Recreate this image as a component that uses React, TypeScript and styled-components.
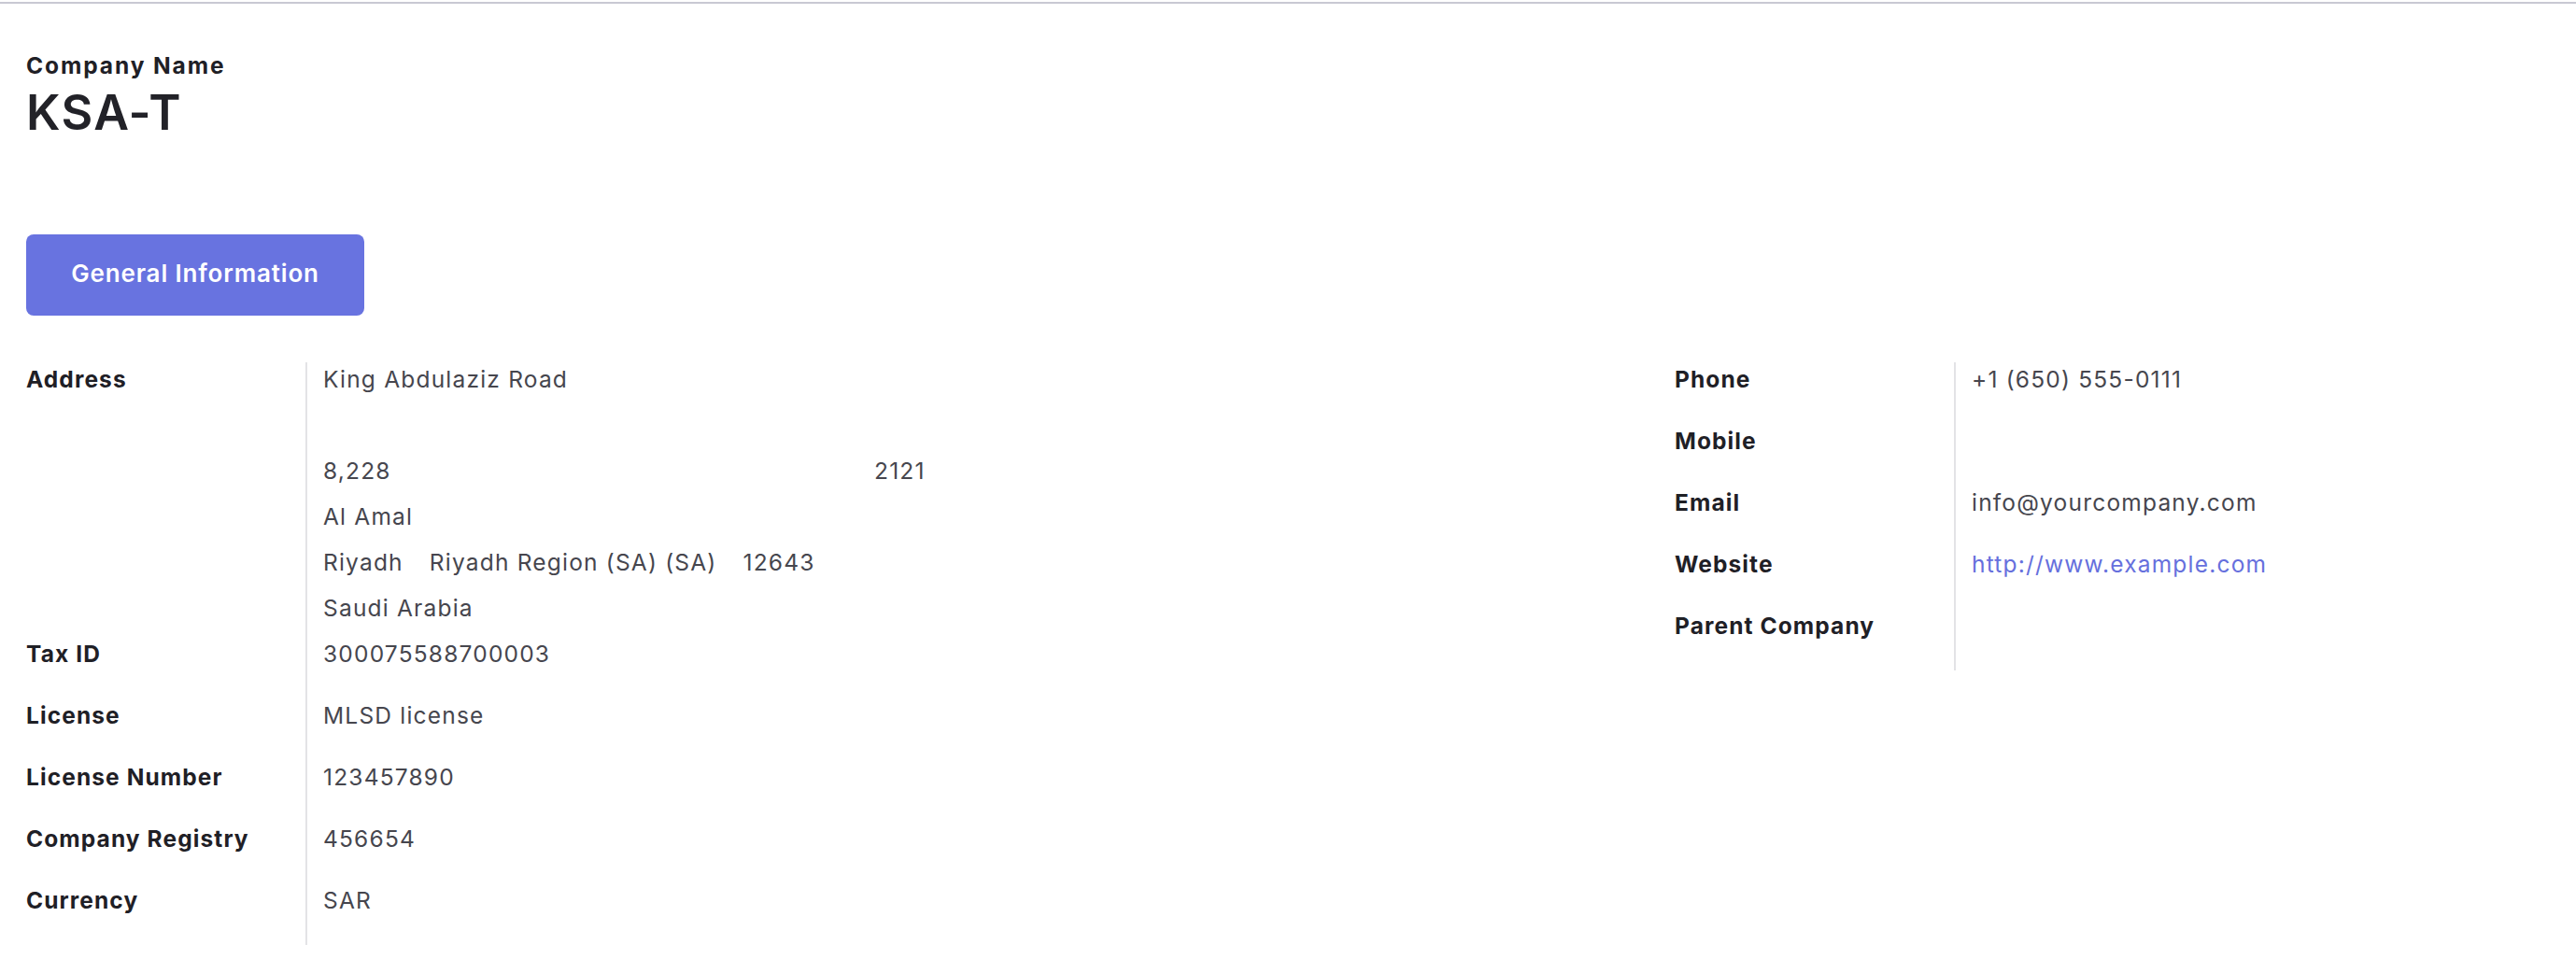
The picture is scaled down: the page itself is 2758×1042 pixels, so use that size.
import React from "react";
import styled, { createGlobalStyle } from "styled-components";

const GlobalStyle = createGlobalStyle`
  html, body {
    margin: 0;
    padding: 0;
    background: #ffffff;
  }
  body {
    font-family: Inter, "Open Sans", "Liberation Sans", sans-serif;
    color: #1f2026;
  }
`;

const Sheet = styled.main`
  margin-top: 2px;
  border-top: 2px solid #c9c9d3;
  padding: 48px 28px 0 28px;
  min-height: 1036px;
  box-sizing: border-box;
`;

const TitleBlock = styled.header`
  display: flex;
  flex-direction: column;
`;

const TitleLabel = styled.div`
  font-size: 24.5px;
  line-height: 36px;
  font-weight: 700;
  letter-spacing: 1.9px;
  color: #1f2026;
`;

const CompanyTitle = styled.h1`
  margin: 1px 0 0 0;
  font-size: 52px;
  line-height: 64px;
  font-weight: 600;
  letter-spacing: 1.4px;
  color: #222228;
`;

const TabBar = styled.nav`
  display: flex;
  margin-top: 98px;
`;

const TabButton = styled.button`
  width: 362px;
  height: 87px;
  border: none;
  border-radius: 8px;
  background: #6873e0;
  color: #ffffff;
  font-family: inherit;
  font-size: 26px;
  font-weight: 600;
  letter-spacing: 0.85px;
  display: flex;
  align-items: center;
  justify-content: center;
  padding: 0 0 4px 0;
  cursor: pointer;
`;

const Columns = styled.section`
  display: grid;
  grid-template-columns: 1765px 1fr;
  margin-top: 50px;
  align-items: start;
`;

const FieldGroup = styled.div`
  display: grid;
  grid-template-columns: 299px 1fr;
`;

const Label = styled.div<{ $compact?: boolean }>`
  font-size: 24.5px;
  line-height: 36px;
  font-weight: 700;
  letter-spacing: 1.1px;
  color: #1f2026;
  padding-bottom: ${(p) => (p.$compact ? "13px" : "30px")};
`;

const Value = styled.div<{ $compact?: boolean }>`
  border-left: 2px solid #e3e3e6;
  padding-left: 17px;
  padding-bottom: ${(p) => (p.$compact ? "13px" : "30px")};
  font-size: 24.5px;
  line-height: 36px;
  font-weight: 400;
  letter-spacing: 1.2px;
  color: #46464e;
  min-height: 36px;
`;

const AddressLines = styled.div`
  display: flex;
  flex-direction: column;
  gap: 13px;
`;

const AddressLine = styled.div`
  height: 36px;
  display: flex;
  gap: 28px;
`;

const AddressPair = styled.div`
  height: 36px;
  display: grid;
  grid-template-columns: 590px auto;
`;

const Link = styled.a`
  color: #6670dd;
  text-decoration: none;
`;

type Field = { label: string; value?: React.ReactNode };

const leftFields: Field[] = [
  { label: "Tax ID", value: "300075588700003" },
  { label: "License", value: "MLSD license" },
  { label: "License Number", value: "123457890" },
  { label: "Company Registry", value: "456654" },
  { label: "Currency", value: "SAR" },
];

const rightFields: Field[] = [
  { label: "Phone", value: "+1 (650) 555-0111" },
  { label: "Mobile" },
  { label: "Email", value: "info@yourcompany.com" },
  {
    label: "Website",
    value: <Link href="#">http://www.example.com</Link>,
  },
  { label: "Parent Company" },
];

export default function App() {
  return (
    <>
      <GlobalStyle />
      <Sheet>
        <TitleBlock>
          <TitleLabel>Company Name</TitleLabel>
          <CompanyTitle>KSA-T</CompanyTitle>
        </TitleBlock>
        <TabBar>
          <TabButton type="button">General Information</TabButton>
        </TabBar>
        <Columns>
          <FieldGroup>
            <Label $compact>Address</Label>
            <Value $compact>
              <AddressLines>
                <AddressLine>King Abdulaziz Road</AddressLine>
                <AddressLine />
                <AddressPair>
                  <span>8,228</span>
                  <span>2121</span>
                </AddressPair>
                <AddressLine>Al Amal</AddressLine>
                <AddressLine>
                  <span>Riyadh</span>
                  <span>Riyadh Region (SA) (SA)</span>
                  <span>12643</span>
                </AddressLine>
                <AddressLine>Saudi Arabia</AddressLine>
              </AddressLines>
            </Value>
            {leftFields.map((f) => (
              <React.Fragment key={f.label}>
                <Label>{f.label}</Label>
                <Value>{f.value}</Value>
              </React.Fragment>
            ))}
          </FieldGroup>
          <FieldGroup>
            {rightFields.map((f) => (
              <React.Fragment key={f.label}>
                <Label>{f.label}</Label>
                <Value>{f.value}</Value>
              </React.Fragment>
            ))}
          </FieldGroup>
        </Columns>
      </Sheet>
    </>
  );
}
